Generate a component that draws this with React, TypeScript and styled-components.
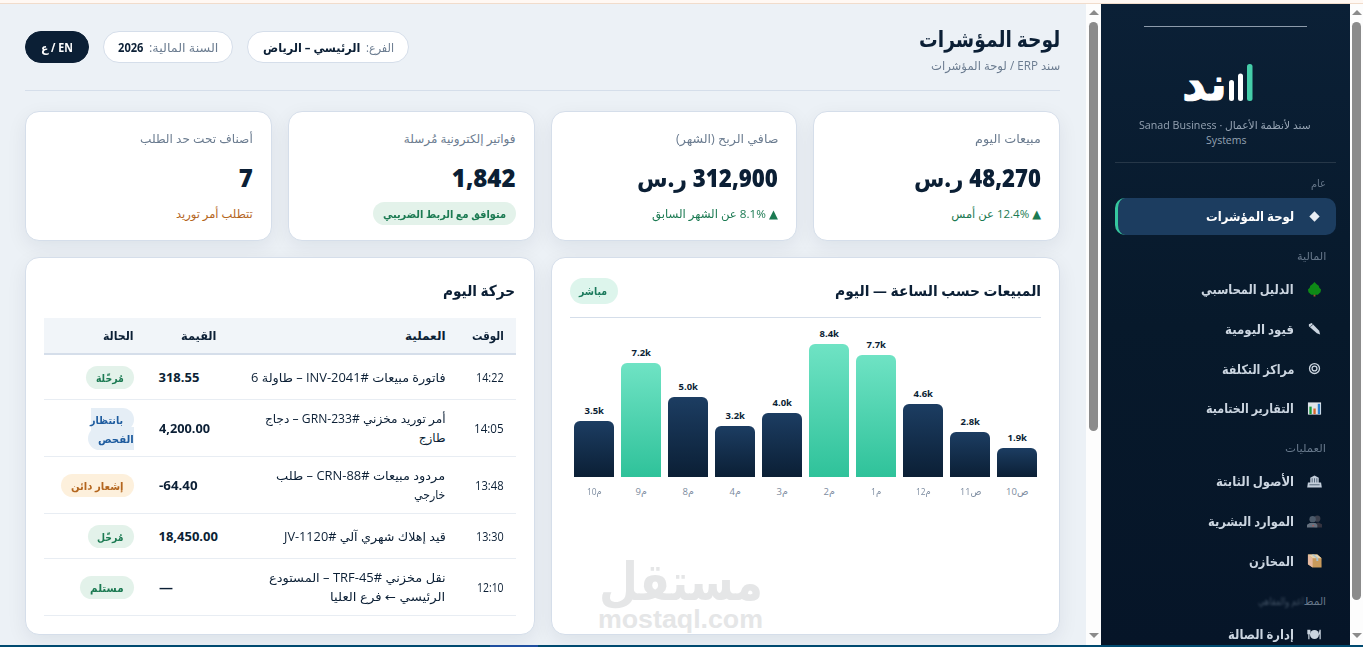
import { ReactNode, useLayoutEffect, useRef, useState } from "react";
import styled, { createGlobalStyle } from "styled-components";

const GlobalStyle = createGlobalStyle`
  * {
    box-sizing: border-box;
  }
  body {
    margin: 0;
    overflow: hidden;
    font-family: "Open Sans", "DejaVu Sans", sans-serif;
    color: #0b1f35;
  }
`;

const Screen = styled.div`
  position: relative;
  display: flex;
  flex-direction: column;
  width: 1363px;
  height: 647px;
  overflow: hidden;
`;

const TopStrip = styled.div`
  flex: none;
  height: 4px;
  background: #fff8f3;
  border-bottom: 1px solid #f1dccb;
`;

const BottomStrip = styled.div`
  flex: none;
  height: 2px;
  background: linear-gradient(
    90deg,
    #004a70 490px,
    #1f4fa0 490px,
    #1f4fa0 538px,
    #004a70 538px
  );
`;

const Body = styled.div`
  display: flex;
  height: 641px;
`;

const Main = styled.main`
  direction: rtl;
  width: 1086px;
  padding: 21px 26px 0 25px;
  background: #ecf1f6;
  overflow: hidden;
`;

/* text squeezed to a fixed run length, anchored at one side */
const FitBox = styled.span<{ $w: number }>`
  display: inline-block;
  width: ${({ $w }) => $w}px;
  white-space: nowrap;
`;

const FitInner = styled.span<{ $ltr?: boolean }>`
  display: inline-block;
  direction: ${({ $ltr }) => ($ltr ? "ltr" : "rtl")};
  transform-origin: ${({ $ltr }) => ($ltr ? "left" : "right")} center;
`;

interface FitProps {
  w: number;
  ltr?: boolean;
  children: ReactNode;
}

function Fit({ w, ltr, children }: FitProps) {
  const ref = useRef<HTMLSpanElement>(null);
  const [scale, setScale] = useState(1);
  useLayoutEffect(() => {
    if (ref.current && ref.current.offsetWidth) {
      setScale(w / ref.current.offsetWidth);
    }
  }, [w]);
  return (
    <FitBox $w={w} dir={ltr ? "ltr" : "rtl"}>
      <FitInner ref={ref} $ltr={ltr} style={{ transform: `scaleX(${scale})` }}>
        {children}
      </FitInner>
    </FitBox>
  );
}

const Header = styled.header`
  display: flex;
  justify-content: space-between;
  height: 66px;
  border-bottom: 1px solid #d5deea;
`;

const Title = styled.h1`
  margin: 0;
  height: 30px;
  font-size: 22px;
  line-height: 27px;
  font-weight: 800;
`;

const Crumb = styled.div`
  font-size: 12px;
  line-height: 21px;
  color: #6b7c90;
`;

const Pills = styled.div`
  display: flex;
  gap: 14px;
  padding-top: 6px;
`;

const Pill = styled.div<{ $dark?: boolean; $w: number }>`
  display: flex;
  align-items: center;
  gap: 6px;
  width: ${({ $w }) => $w}px;
  height: 32px;
  padding-right: ${({ $dark }) => ($dark ? 15 : 14)}px;
  border-radius: 16px;
  border: 1px solid ${({ $dark }) => ($dark ? "#0b1f35" : "#d5deea")};
  background: ${({ $dark }) => ($dark ? "#0b1f35" : "#fff")};
  color: ${({ $dark }) => ($dark ? "#fff" : "#6b7c90")};
  font-size: 12px;
  font-weight: ${({ $dark }) => ($dark ? 700 : 400)};
  b {
    color: #0b1f35;
  }
`;

const Stats = styled.section`
  display: grid;
  grid-template-columns: repeat(4, 1fr);
  gap: 16px;
  margin-top: 20px;
`;

const Card = styled.div`
  background: #fff;
  border: 1px solid #d5deea;
  border-radius: 14px;
  box-shadow: 0 6px 20px rgba(11, 31, 53, 0.07);
`;

const StatCard = styled(Card)`
  height: 130px;
  padding: 16px 18px 0;
`;

const StatLabel = styled.div`
  font-size: 12px;
  line-height: 21px;
  color: #6b7c90;
`;

const StatValue = styled.div`
  margin-top: 9px;
  height: 40px;
  font-size: 24px;
  line-height: 39px;
  font-weight: 800;
`;

const StatNote = styled.div<{ $color: string }>`
  margin-top: 4px;
  font-size: 11.5px;
  line-height: 23px;
  color: ${({ $color }) => $color};
`;

const tones = {
  green: { bg: "#e3f2ea", fg: "#1b7a52" },
  blue: { bg: "#e5eef6", fg: "#1d5b9e" },
  amber: { bg: "#fdf0dc", fg: "#b4661e" },
  mint: { bg: "#ddf5ec", fg: "#1b7a5c" },
};

type Tone = keyof typeof tones;

const Badge = styled.span<{ $tone: Tone; $large?: boolean }>`
  padding: ${({ $large }) => ($large ? "4px 10px 5px" : "3px 10px")};
  border-radius: 999px;
  font-size: 11px;
  line-height: 17px;
  font-weight: 700;
  display: inline-block;
  vertical-align: top;
  background: ${({ $tone }) => tones[$tone].bg};
  color: ${({ $tone }) => tones[$tone].fg};
`;

/* breaks over two lines, each line keeps its slice of the background */
const BrokenBadge = styled.span`
  padding: 4px 10px;
  border-radius: 999px;
  font-size: 11px;
  line-height: 19px;
  font-weight: 700;
  background: ${tones.blue.bg};
  color: ${tones.blue.fg};
`;

const Panels = styled.section`
  display: grid;
  grid-template-columns: 1fr 1fr;
  gap: 16px;
  margin-top: 16px;
`;

const Panel = styled(Card)`
  height: 378px;
  padding: 17px 18px 0;
`;

const PanelHead = styled.div<{ $line?: boolean }>`
  display: flex;
  align-items: center;
  justify-content: space-between;
  height: 43px;
  padding-bottom: ${({ $line }) => ($line ? 10 : 12)}px;
  border-bottom: ${({ $line }) => ($line ? "1px solid #d5deea" : "none")};
`;

const PanelTitle = styled.h2`
  margin: 0;
  font-size: 15px;
  line-height: 24px;
  padding-bottom: 2px;
  font-weight: 700;
`;

const Bars = styled.div`
  display: flex;
  align-items: flex-end;
  gap: 7px;
  height: 159px;
  padding: 0 4px;
`;

const BarCol = styled.div`
  width: 40px;
  text-align: center;
`;

const BarValue = styled.div`
  font-size: 9.5px;
  line-height: 14px;
  font-weight: 700;
  margin-bottom: 3px;
`;

const Bar = styled.div<{ $high?: boolean }>`
  border-radius: 6px 6px 0 0;
  background: ${({ $high }) =>
    $high
      ? "linear-gradient(#6fe3c4, #2fc29a)"
      : "linear-gradient(#1c3d62, #0b1f35)"};
`;

const Axis = styled.div`
  display: flex;
  gap: 7px;
  padding: 7px 4px 0;
`;

const Tick = styled.div`
  width: 40px;
  direction: ltr;
  text-align: center;
  font-size: 9.5px;
  line-height: 15px;
  color: #7d8ca0;
`;

const Watermark = styled.svg`
  display: block;
  direction: ltr;
  overflow: visible;
  margin: 59px 276px 0 0;
  width: 168px;
  height: 76px;
  fill: #e5e6e7;
`;

const Table = styled.div`
  display: flex;
  flex-direction: column;
`;

const Row = styled.div<{ $h: number; $head?: boolean }>`
  display: grid;
  grid-template-columns: 58px 229px 83px 1fr;
  align-items: center;
  height: ${({ $h }) => $h}px;
  padding-bottom: ${({ $head }) => ($head ? 1 : 0)}px;
  border-bottom: ${({ $head }) =>
    $head ? "2px solid #d5deea" : "1px solid #e8edf3"};
  background: ${({ $head }) => ($head ? "#f1f5f9" : "transparent")};
  font-weight: ${({ $head }) => ($head ? 700 : 400)};
  font-size: 12px;
  line-height: 19px;
`;

const Cell = styled.div`
  padding: 0 12px;
`;

const StatusCell = styled(Cell)`
  padding-top: 1px;
`;

const ValueCell = styled(Cell)`
  direction: ltr;
  padding-left: 13px;
  font-size: 13px;
  font-weight: 700;
`;

const Scrollbar = styled.div<{ $w: number }>`
  display: flex;
  flex-direction: column;
  align-items: center;
  flex: none;
  width: ${({ $w }) => $w}px;
  padding: 6px 0 7px;
  background: #fdfdfd;
`;

const Thumb = styled.div<{ $h: number }>`
  width: 9px;
  height: ${({ $h }) => $h}px;
  margin: 7px 0 auto;
  border-radius: 5px;
  background: #8b8b8b;
`;

const Arrow = styled.div<{ $down?: boolean }>`
  border: 5px solid transparent;
  border-top-width: ${({ $down }) => ($down ? 5 : 0)}px;
  border-bottom-width: ${({ $down }) => ($down ? 0 : 5)}px;
  border-top-color: ${({ $down }) => ($down ? "#8b8b8b" : "transparent")};
  border-bottom-color: ${({ $down }) => ($down ? "transparent" : "#8b8b8b")};
`;

const Sidebar = styled.aside`
  direction: rtl;
  flex: none;
  width: 249px;
  height: 641px;
  padding: 22px 14px 0;
  overflow: hidden;
  background: linear-gradient(#0b2036, #07192b 50%, #061528);
`;

const Brand = styled.div`
  height: 137px;
  margin-bottom: 1px;
  text-align: center;
  border-bottom: 1px solid #263748;
`;

const Logo = styled.svg`
  display: block;
  margin: 0 auto;
  direction: ltr;
`;

const Tagline = styled.div`
  padding: 7px 0 0 2px;
  font-size: 10.5px;
  line-height: 15px;
  color: #95a3b3;
`;

const SectionLabel = styled.div`
  height: 33.5px;
  padding: 11px 10px 0;
  font-size: 10.5px;
  line-height: 17px;
  color: #66778a;
`;

const Faded = styled.span`
  filter: blur(1px);
  opacity: 0.6;
`;

const NavItem = styled.div<{ $active?: boolean }>`
  display: flex;
  align-items: center;
  gap: 12px;
  height: 37px;
  margin-bottom: 2.7px;
  padding: 0 14px;
  border-radius: 10px;
  border-left: 3px solid ${({ $active }) => ($active ? "#36c79f" : "transparent")};
  background: ${({ $active }) => ($active ? "#1c3d60" : "transparent")};
  color: ${({ $active }) => ($active ? "#fff" : "#cbd5e0")};
  font-size: 13px;
  font-weight: 600;
`;

const IconSlot = styled.span`
  display: flex;
  justify-content: center;
  width: 16px;
`;

const icons: Record<string, ReactNode> = {
  diamond: <path d="M8 2.500l5.500 5.500L8 13.500 2.500 8z" fill="#e8edf3" />,
  tree: (
    <>
      <path d="M7 12h2v3.500H7z" fill="#a0522d" />
      <path d="M8 0l2 2 2.500 2 .6 2L15 8l-.6 3L11.500 13.500h-7l-2.900-2.500L1 8l1.900-2L3.500 4 6 2z" fill="#0e8a16" />
    </>
  ),
  pencil: (
    <>
      <path d="M2 3.500L5 2l8 8.500 1 4-3.500-1.500L2 5.500z" fill="#cbd5e0" />
      <path d="M3.500 6L6.500 3.500" stroke="#07192b" strokeWidth=".7" />
    </>
  ),
  target: (
    <g fill="none" stroke="#cbd5e0" strokeWidth="1.4">
      <circle cx="8" cy="8" r="5.300" />
      <circle cx="8" cy="8" r="2.600" />
    </g>
  ),
  report: (
    <>
      <path d="M1 1.500h14v13H1z" fill="#dfe5ea" />
      <path d="M2.500 6h2.500v8H2.500z" fill="#189a3a" />
      <path d="M6.800 8h2.500v6H6.800z" fill="#d9652b" />
      <path d="M11.500 3h2.500v11h-2.500z" fill="#2a7fd0" />
    </>
  ),
  bank: (
    <>
      <path d="M3.500 4L8 1.500 12.500 4v5H15l.8 5.500H.2L1 9h2.500z" fill="#c3cedb" />
      <path d="M5.500 4.500V9M8 4.500V9M10.500 4.500V9M2.500 11.500h11" stroke="#33475c" strokeWidth=".8" />
    </>
  ),
  people: (
    <>
      <circle cx="11" cy="5" r="3.300" fill="#3b3f4c" />
      <path d="M8 14.500V10l4-1 4 2v3.500z" fill="#34333f" />
      <circle cx="6" cy="5.500" r="3.400" fill="#4d5b6b" />
      <path d="M0 14.500v-3L3 9.500h6l2 2v3z" fill="#66717f" />
      <circle cx="6.500" cy="12.500" r=".8" fill="#c0524e" />
    </>
  ),
  box: (
    <>
      <path d="M1 1.500h10l4.500 4v10H6l-5-3.500z" fill="#c99a5b" />
      <path d="M1 1.500l5 4v10l-5-3.500z" fill="#e6b9a0" />
      <path d="M1 1.500h10l4.500 4H6z" fill="#e8d3ac" />
      <path d="M5 1.500h2.500l4.500 4v3h-2v-3z" fill="#a9c3d2" />
    </>
  ),
  dish: (
    <>
      <circle cx="8" cy="8" r="4.800" fill="#cbd5e0" />
      <path d="M2 3v10M14 3v10M1 3v4h2V3M14 3l-1 5" stroke="#cbd5e0" strokeWidth="1.300" fill="none" />
    </>
  ),
};

const nav = [
  {
    label: "عام",
    w: 15,
    items: [{ icon: "diamond", text: "لوحة المؤشرات", w: 88, active: true }],
  },
  {
    label: "المالية",
    w: 29,
    items: [
      { icon: "tree", text: "الدليل المحاسبي", w: 93 },
      { icon: "pencil", text: "قيود اليومية", w: 69 },
      { icon: "target", text: "مراكز التكلفة", w: 72 },
      { icon: "report", text: "التقارير الختامية", w: 88 },
    ],
  },
  {
    label: "العمليات",
    w: 41,
    items: [
      { icon: "bank", text: "الأصول الثابتة", w: 78 },
      { icon: "people", text: "الموارد البشرية", w: 86 },
      { icon: "box", text: "المخازن", w: 45 },
    ],
  },
  {
    label: "المط",
    faded: "اعم والمقاهي",
    w: 22,
    items: [{ icon: "dish", text: "إدارة الصالة", w: 66 }],
  },
] as {
  label: string;
  faded?: string;
  w: number;
  items: { icon: string; text: string; w: number; active?: boolean }[];
}[];

const bars = [
  { value: "1.9k", h: 29, tick: "10ص", tw: 22 },
  { value: "2.8k", h: 45, tick: "11ص", tw: 21 },
  { value: "4.6k", h: 73, tick: "12م", tw: 15 },
  { value: "7.7k", h: 122, tick: "1م", tw: 10, high: true },
  { value: "8.4k", h: 133, tick: "2م", tw: 11, high: true },
  { value: "4.0k", h: 64, tick: "3م", tw: 11 },
  { value: "3.2k", h: 51, tick: "4م", tw: 11 },
  { value: "5.0k", h: 80, tick: "8م", tw: 11 },
  { value: "7.2k", h: 114, tick: "9م", tw: 11, high: true },
  { value: "3.5k", h: 56, tick: "10م", tw: 15 },
];

interface Move {
  time: string;
  tw: number;
  lines: [string, number][];
  value: string;
  vw: number;
  status: [string, number][];
  tone: Tone;
}

const moves: Move[] = [
  {
    time: "14:22",
    tw: 28,
    lines: [["فاتورة مبيعات #INV-2041 – طاولة 6", 195]],
    value: "318.55",
    vw: 41,
    status: [["مُرحّلة", 28]],
    tone: "green",
  },
  {
    time: "14:05",
    tw: 30,
    lines: [
      ["أمر توريد مخزني #GRN-233 – دجاج", 181],
      ["طازج", 27],
    ],
    value: "4,200.00",
    vw: 51,
    status: [
      ["بانتظار", 33],
      ["الفحص", 36],
    ],
    tone: "blue",
  },
  {
    time: "13:48",
    tw: 29,
    lines: [
      ["مردود مبيعات #CRN-88 – طلب", 169],
      ["خارجي", 31],
    ],
    value: "-64.40",
    vw: 39,
    status: [["إشعار دائن", 53]],
    tone: "amber",
  },
  {
    time: "13:30",
    tw: 28,
    lines: [["قيد إهلاك شهري آلي #JV-1120", 162]],
    value: "18,450.00",
    vw: 59,
    status: [["مُرحّل", 26]],
    tone: "green",
  },
  {
    time: "12:10",
    tw: 27,
    lines: [
      ["نقل مخزني #TRF-45 – المستودع", 177],
      ["الرئيسي ← فرع العليا", 115],
    ],
    value: "—",
    vw: 14,
    status: [["مستلم", 34]],
    tone: "green",
  },
];

function ScrollTrack({ w, thumb }: { w: number; thumb: number }) {
  return (
    <Scrollbar $w={w}>
      <Arrow />
      <Thumb $h={thumb} />
      <Arrow $down />
    </Scrollbar>
  );
}

function SalesPanel() {
  return (
    <Panel>
      <PanelHead $line>
        <PanelTitle>
          <Fit w={206}>المبيعات حسب الساعة — اليوم</Fit>
        </PanelTitle>
        <Badge $tone="mint" $large>
          <Fit w={28}>مباشر</Fit>
        </Badge>
      </PanelHead>
      <Bars>
        {bars.map((bar) => (
          <BarCol key={bar.tick}>
            <BarValue>
              <Fit w={19} ltr>
                {bar.value}
              </Fit>
            </BarValue>
            <Bar $high={bar.high} style={{ height: bar.h }} />
          </BarCol>
        ))}
      </Bars>
      <Axis>
        {bars.map((bar) => (
          <Tick key={bar.tick}>
            <Fit w={bar.tw} ltr>
              {bar.tick}
            </Fit>
          </Tick>
        ))}
      </Axis>
      <Watermark viewBox="0 0 168 76">
        <text
          x="2"
          y="42"
          fontFamily="DejaVu Sans"
          fontWeight="700"
          fontSize="52"
          textLength="164"
          lengthAdjust="spacingAndGlyphs"
        >
          مستقل
        </text>
        <text
          x="1"
          y="70"
          fontFamily="Liberation Sans"
          fontWeight="700"
          fontSize="26"
          textLength="165"
          lengthAdjust="spacingAndGlyphs"
        >
          mostaql.com
        </text>
      </Watermark>
    </Panel>
  );
}

function MovesPanel() {
  return (
    <Panel>
      <PanelHead>
        <PanelTitle>
          <Fit w={72}>حركة اليوم</Fit>
        </PanelTitle>
      </PanelHead>
      <Table>
        <Row $h={37} $head>
          <Cell>
            <Fit w={32}>الوقت</Fit>
          </Cell>
          <Cell>
            <Fit w={41}>العملية</Fit>
          </Cell>
          <Cell>
            <Fit w={35}>القيمة</Fit>
          </Cell>
          <Cell>
            <Fit w={31}>الحالة</Fit>
          </Cell>
        </Row>
        {moves.map((move) => (
          <Row key={move.time} $h={move.lines.length > 1 ? 57 : 45}>
            <Cell>
              <Fit w={move.tw}>{move.time}</Fit>
            </Cell>
            <Cell>
              {move.lines.map(([text, w]) => (
                <div key={text}>
                  <Fit w={w}>{text}</Fit>
                </div>
              ))}
            </Cell>
            <ValueCell>
              <Fit w={move.vw} ltr>
                {move.value}
              </Fit>
            </ValueCell>
            <StatusCell>
              {move.status.length > 1 ? (
                <BrokenBadge>
                  <Fit w={move.status[0][1]}>{move.status[0][0]}</Fit>
                  <br />
                  <Fit w={move.status[1][1]}>{move.status[1][0]}</Fit>
                </BrokenBadge>
              ) : (
                <Badge $tone={move.tone}>
                  <Fit w={move.status[0][1]}>{move.status[0][0]}</Fit>
                </Badge>
              )}
            </StatusCell>
          </Row>
        ))}
      </Table>
    </Panel>
  );
}

function SideNav() {
  return (
    <Sidebar>
      <Brand>
        <Logo width="163" height="85" viewBox="0 0 163 85">
          <path d="M0 .5h163" stroke="#8d9bab" />
          <rect x="103" y="38" width="5.500" height="37" rx="2.500" fill="#45cda9" />
          <rect x="94" y="47.500" width="5" height="27.500" rx="2.500" fill="#fff" />
          <rect x="85" y="54" width="5" height="21" rx="2.500" fill="#fff" />
          <text
            x="38"
            y="74"
            fill="#fff"
            stroke="#fff"
            strokeWidth="1"
            strokeLinejoin="round"
            fontFamily="DejaVu Sans"
            fontWeight="700"
            fontSize="46"
            textLength="45"
            lengthAdjust="spacingAndGlyphs"
          >
            ند
          </text>
        </Logo>
        <Tagline>
          <Fit w={172}>سند لأنظمة الأعمال · Sanad Business</Fit>
          <br />
          <Fit w={40}>Systems</Fit>
        </Tagline>
      </Brand>
      {nav.map((section) => (
        <div key={section.label}>
          <SectionLabel>
            <Fit w={section.w}>{section.label}</Fit>
            {section.faded && (
              <Faded>
                <Fit w={46}>{section.faded}</Fit>
              </Faded>
            )}
          </SectionLabel>
          {section.items.map((item) => (
            <NavItem key={item.text} $active={item.active}>
              <IconSlot>
                <svg width="15" height="15" viewBox="0 0 16 16">
                  {icons[item.icon]}
                </svg>
              </IconSlot>
              <Fit w={item.w}>{item.text}</Fit>
            </NavItem>
          ))}
        </div>
      ))}
    </Sidebar>
  );
}

function App() {
  return (
    <Screen>
      <GlobalStyle />
      <TopStrip />
      <Body>
        <Main>
          <Header>
            <div>
              <Title>
                <Fit w={141}>لوحة المؤشرات</Fit>
              </Title>
              <Crumb>
                <Fit w={129}>سند ERP / لوحة المؤشرات</Fit>
              </Crumb>
            </div>
            <Pills>
              <Pill $w={162}>
                <Fit w={28}>الفرع:</Fit>
                <b>
                  <Fit w={97}>الرئيسي – الرياض</Fit>
                </b>
              </Pill>
              <Pill $w={130}>
                <Fit w={69}>السنة المالية:</Fit>
                <b>
                  <Fit w={25}>2026</Fit>
                </b>
              </Pill>
              <Pill $w={64} $dark>
                <Fit w={32}>EN / ع</Fit>
              </Pill>
            </Pills>
          </Header>
          <Stats>
            <StatCard>
              <StatLabel>
                <Fit w={66}>مبيعات اليوم</Fit>
              </StatLabel>
              <StatValue>
                <Fit w={127}>48,270 ر.س</Fit>
              </StatValue>
              <StatNote $color="#1b7a52">
                <Fit w={90}>▲ 12.4% عن أمس</Fit>
              </StatNote>
            </StatCard>
            <StatCard>
              <StatLabel>
                <Fit w={102}>صافي الربح (الشهر)</Fit>
              </StatLabel>
              <StatValue>
                <Fit w={141}>312,900 ر.س</Fit>
              </StatValue>
              <StatNote $color="#1b7a52">
                <Fit w={126}>▲ 8.1% عن الشهر السابق</Fit>
              </StatNote>
            </StatCard>
            <StatCard>
              <StatLabel>
                <Fit w={112}>فواتير إلكترونية مُرسلة</Fit>
              </StatLabel>
              <StatValue>
                <Fit w={64}>1,842</Fit>
              </StatValue>
              <StatNote $color="#1b7a52">
                <Badge $tone="green">
                  <Fit w={123}>متوافق مع الربط الضريبي</Fit>
                </Badge>
              </StatNote>
            </StatCard>
            <StatCard>
              <StatLabel>
                <Fit w={113}>أصناف تحت حد الطلب</Fit>
              </StatLabel>
              <StatValue>
                <Fit w={14}>7</Fit>
              </StatValue>
              <StatNote $color="#b4661e">
                <Fit w={77}>تتطلب أمر توريد</Fit>
              </StatNote>
            </StatCard>
          </Stats>
          <Panels>
            <SalesPanel />
            <MovesPanel />
          </Panels>
        </Main>
        <ScrollTrack w={15} thumb={409} />
        <SideNav />
        <ScrollTrack w={13} thumb={578} />
      </Body>
      <BottomStrip />
    </Screen>
  );
}

export default App;
